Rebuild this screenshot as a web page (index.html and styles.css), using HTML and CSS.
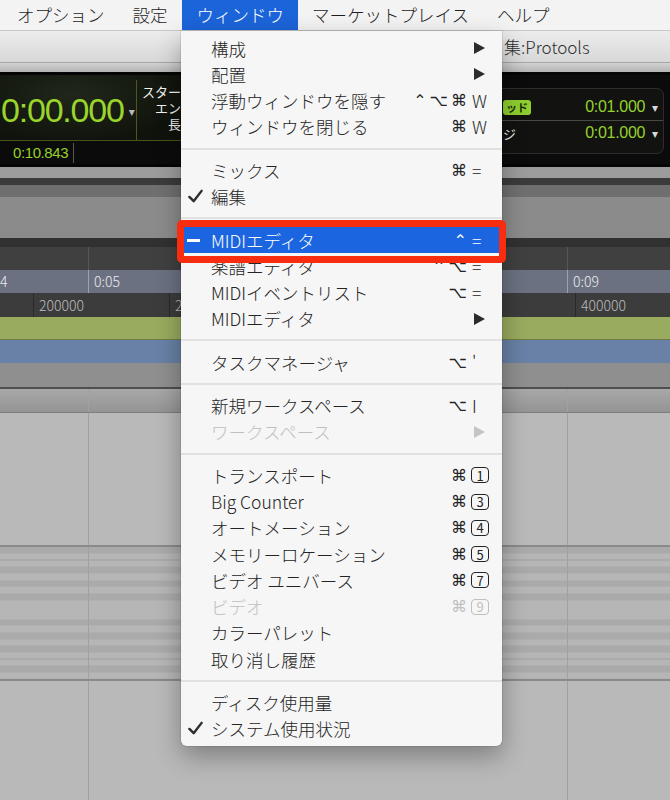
FILE: index.html
```html
<!DOCTYPE html>
<html lang="ja">
<head>
  <meta charset="UTF-8">
  <meta name="viewport" content="width=device-width, initial-scale=1.0">
  <title>ウィンドウ メニュー</title>
  <link rel="stylesheet" href="styles.css">
</head>
<body>
  <div class="screen">
    <nav class="menubar">
      <span>オプション</span>
      <span>設定</span>
      <span class="open">ウィンドウ</span>
      <span>マーケットプレイス</span>
      <span>ヘルプ</span>
    </nav>

    <div class="titlebar"><span class="title">集:Protools</span></div>
    <div class="toolstrip"></div>

    <div class="transport">
      <div class="counter-block">
        <div class="counter-top">
          <div class="counter">
            <span class="big-time">0:00.000</span>
            <span class="caret">&#9662;</span>
          </div>
          <div class="labels">
            <span>スター</span>
            <span>エン</span>
            <span>長</span>
          </div>
        </div>
        <div class="counter-sub">
          <span class="sub-time">0:10.843</span>
        </div>
      </div>
      <div class="selbox">
        <div class="sel-row">
          <span class="badge">ッド</span>
          <span class="sel-value">0:01.000 <span class="caret">&#9662;</span></span>
        </div>
        <div class="sel-row">
          <span class="sel-label">ジ</span>
          <span class="sel-value">0:01.000 <span class="caret">&#9662;</span></span>
        </div>
      </div>
    </div>

    <div class="edit">
      <div class="band band-a"></div>
      <div class="band band-b"></div>
      <div class="band band-c"></div>
      <div class="band band-d"></div>
      <div class="band band-e"></div>
      <div class="ruler ruler-bars cols">
        <div></div><div></div><div></div>
      </div>
      <div class="ruler ruler-time cols">
        <div>4</div><div>0:05</div><div>0:09</div>
      </div>
      <div class="ruler ruler-samples cols-samples">
        <div></div><div>200000</div><div>2</div><div>400000</div>
      </div>
      <div class="band band-green"></div>
      <div class="band band-blue"></div>
      <div class="band band-gray"></div>
      <div class="track-head cols"><div></div><div></div><div></div></div>
      <div class="track cols"><div></div><div></div><div></div></div>
      <div class="track keys cols"><div></div><div></div><div></div></div>
      <div class="track track-end cols"><div></div><div></div><div></div></div>
    </div>

    <div class="menu">
      <div class="item"><span class="mark"></span><span>構成</span><span class="keys-sc"><span class="mods"></span><span class="key"><svg class="arrow" viewBox="0 0 11 12"><polygon points="0,0 11,6 0,12"/></svg></span></span></div>
      <div class="item"><span class="mark"></span><span>配置</span><span class="keys-sc"><span class="mods"></span><span class="key"><svg class="arrow" viewBox="0 0 11 12"><polygon points="0,0 11,6 0,12"/></svg></span></span></div>
      <div class="item"><span class="mark"></span><span>浮動ウィンドウを隠す</span><span class="keys-sc"><span class="mods">⌃⌥⌘</span><span class="key">W</span></span></div>
      <div class="item"><span class="mark"></span><span>ウィンドウを閉じる</span><span class="keys-sc"><span class="mods">⌘</span><span class="key">W</span></span></div>
      <div class="sep"></div>
      <div class="item"><span class="mark"></span><span>ミックス</span><span class="keys-sc"><span class="mods">⌘</span><span class="key">=</span></span></div>
      <div class="item"><span class="mark"><svg class="check" viewBox="0 0 16 16"><path d="M1.5 8.5 L6 13 L14.5 2"/></svg></span><span>編集</span><span class="keys-sc"></span></div>
      <div class="sep"></div>
      <div class="item on"><span class="mark"><span class="dash"></span></span><span>MIDIエディタ</span><span class="keys-sc"><span class="mods">⌃</span><span class="key">=</span></span></div>
      <div class="item"><span class="mark"></span><span>楽譜エディタ</span><span class="keys-sc"><span class="mods">⌃⌥</span><span class="key">=</span></span></div>
      <div class="item"><span class="mark"></span><span>MIDIイベントリスト</span><span class="keys-sc"><span class="mods">⌥</span><span class="key">=</span></span></div>
      <div class="item"><span class="mark"></span><span>MIDIエディタ</span><span class="keys-sc"><span class="mods"></span><span class="key"><svg class="arrow" viewBox="0 0 11 12"><polygon points="0,0 11,6 0,12"/></svg></span></span></div>
      <div class="sep"></div>
      <div class="item"><span class="mark"></span><span>タスクマネージャ</span><span class="keys-sc"><span class="mods">⌥</span><span class="key">'</span></span></div>
      <div class="sep"></div>
      <div class="item"><span class="mark"></span><span>新規ワークスペース</span><span class="keys-sc"><span class="mods">⌥</span><span class="key">I</span></span></div>
      <div class="item off"><span class="mark"></span><span>ワークスペース</span><span class="keys-sc"><span class="mods"></span><span class="key"><svg class="arrow" viewBox="0 0 11 12"><polygon points="0,0 11,6 0,12"/></svg></span></span></div>
      <div class="sep"></div>
      <div class="item"><span class="mark"></span><span>トランスポート</span><span class="keys-sc"><span class="mods">⌘</span><span class="key"><span class="boxkey">1</span></span></span></div>
      <div class="item"><span class="mark"></span><span>Big Counter</span><span class="keys-sc"><span class="mods">⌘</span><span class="key"><span class="boxkey">3</span></span></span></div>
      <div class="item"><span class="mark"></span><span>オートメーション</span><span class="keys-sc"><span class="mods">⌘</span><span class="key"><span class="boxkey">4</span></span></span></div>
      <div class="item"><span class="mark"></span><span>メモリーロケーション</span><span class="keys-sc"><span class="mods">⌘</span><span class="key"><span class="boxkey">5</span></span></span></div>
      <div class="item"><span class="mark"></span><span>ビデオ ユニバース</span><span class="keys-sc"><span class="mods">⌘</span><span class="key"><span class="boxkey">7</span></span></span></div>
      <div class="item off"><span class="mark"></span><span>ビデオ</span><span class="keys-sc"><span class="mods">⌘</span><span class="key"><span class="boxkey">9</span></span></span></div>
      <div class="item"><span class="mark"></span><span>カラーパレット</span><span class="keys-sc"></span></div>
      <div class="item"><span class="mark"></span><span>取り消し履歴</span><span class="keys-sc"></span></div>
      <div class="sep"></div>
      <div class="item"><span class="mark"></span><span>ディスク使用量</span><span class="keys-sc"></span></div>
      <div class="item"><span class="mark"><svg class="check" viewBox="0 0 16 16"><path d="M1.5 8.5 L6 13 L14.5 2"/></svg></span><span>システム使用状況</span><span class="keys-sc"></span></div>
    </div>

    <div class="callout"></div>
  </div>
</body>
</html>
```

FILE: styles.css
```css
body {
  margin: 0;
  padding: 0;
  background: #b8b8b8;
  font-family: "Noto Sans CJK JP", "DejaVu Sans", sans-serif;
}

.screen {
  position: relative;
  width: 670px;
  height: 800px;
  overflow: hidden;
  background: #b8b8b8;
}

/* menu bar */

.menubar {
  display: flex;
  height: 30px;
  background: #f3f3f3;
  border-bottom: 1px solid #c8c8c8;
  font-size: 17.5px;
  font-weight: 300;
  color: #1e1e1e;
}

.menubar span {
  padding: 0 14px;
  line-height: 30px;
  white-space: nowrap;
}

.menubar span:first-child {
  margin-left: 3px;
}

.menubar .open {
  padding-left: 15px;
  background: #1c64da;
  color: #ffffff;
}

/* window title */

.titlebar {
  height: 31px;
  background: linear-gradient(#ececec, #d8d8d8);
  border-bottom: 1px solid #a6a6a6;
}

.title {
  display: block;
  padding-left: 504px;
  line-height: 31px;
  font-size: 17px;
  font-weight: 300;
  color: #2e2e2e;
  white-space: nowrap;
}

.toolstrip {
  height: 9px;
  background: linear-gradient(#d2d2d2, #b4b4b4);
}

/* transport */

.transport {
  display: flex;
  height: 89px;
  border-top: 3px solid #050505;
  border-bottom: 3px solid #050505;
  background: #0b0b0b;
}

.counter-block {
  width: 181px;
  display: flex;
  flex-direction: column;
}

.counter-top {
  display: flex;
  height: 65px;
  border-bottom: 1px solid #45531d;
  background: radial-gradient(ellipse at 40% 30%, #20271a, #10130c 75%);
}

.counter {
  width: 137px;
  display: flex;
  align-items: center;
  padding-left: 1px;
  box-sizing: border-box;
  border-right: 1px solid #4a5822;
  margin: 5px 0 0;
}

.big-time {
  font-family: "Liberation Sans", Arial, sans-serif;
  font-size: 34px;
  letter-spacing: -1.2px;
  color: #9ad52b;
}

.counter .caret {
  margin-left: 5px;
  font-size: 12px;
  color: #b9b9b9;
}

.labels {
  flex: 1;
  display: flex;
  flex-direction: column;
  justify-content: center;
  align-items: flex-end;
  font-size: 13px;
  line-height: 16px;
  color: #f2f2f2;
}

.counter-sub {
  height: 23px;
  display: flex;
  align-items: center;
}

.sub-time {
  padding: 0 5px 0 13px;
  border-right: 1px solid #5a5a4a;
  font-family: "Liberation Sans", Arial, sans-serif;
  font-size: 15px;
  letter-spacing: -0.4px;
  line-height: 20px;
  color: #97d02c;
}

.selbox {
  align-self: flex-start;
  margin: 13px 6px 0 auto;
  width: 164px;
  height: 66px;
  padding-top: 5px;
  box-sizing: border-box;
  background: #121310;
  border: 1px solid #2d2d2d;
  border-radius: 0 7px 7px 0;
}

.sel-row {
  display: flex;
  align-items: center;
  justify-content: space-between;
  height: 26px;
  padding: 0 5px 0 2px;
}

.sel-row + .sel-row {
  height: 24px;
  border-top: 1px solid #4a4a44;
}

.badge {
  padding: 0 3px;
  border-radius: 3px;
  background: #8fd02f;
  color: #1c2a08;
  font-size: 11px;
  font-weight: bold;
  line-height: 15px;
}

.sel-label {
  font-size: 13px;
  color: #f0f0f0;
}

.sel-value {
  font-family: "Liberation Sans", Arial, sans-serif;
  font-size: 16px;
  letter-spacing: -0.3px;
  color: #96d22c;
}

.sel-value .caret {
  margin-left: 3px;
  font-size: 12px;
  color: #d8d8d8;
}

/* edit window */

.band-a { height: 11px; background: #9c9c9c; }
.band-b { height: 7px; background: #3b3b3b; }
.band-c { height: 12px; background: #6f6f6f; }
.band-d { height: 41px; background: #8b8b8b; }
.band-e { height: 9px; background: #313131; }

.cols {
  display: grid;
  grid-template-columns: 88px 479px 1fr;
}

.cols-samples {
  display: grid;
  grid-template-columns: 33px 136px 406px 1fr;
}

.ruler {
  height: 23px;
  font-size: 14px;
  font-weight: 300;
  line-height: 23px;
}

.ruler > div {
  padding-left: 5px;
  white-space: nowrap;
  overflow: hidden;
}

.ruler > div + div {
  border-left: 1px solid #555555;
}

.ruler > div:first-child {
  padding-left: 0;
}

.ruler-bars {
  background: #404040;
}

.ruler-time {
  background: #6b7181;
  color: #ececec;
}

.ruler-time > div + div {
  border-left-color: #4d525d;
}

.ruler-samples {
  height: 24px;
  line-height: 24px;
  background: #3c3c3c;
  color: #bdbdbd;
}

.ruler-samples > div + div {
  border-left-color: #2a2a2a;
}

.band-green {
  height: 23px;
  background: #98ab5e;
  border-bottom: 1px solid #6f7d44;
  box-sizing: border-box;
}

.band-blue {
  height: 23px;
  background: #6981a6;
}

.band-gray {
  height: 24px;
  background: #8f8f8f;
  border-bottom: 2px solid #4e4e4e;
}

.track-head {
  height: 23px;
  background: linear-gradient(#a8a8a8, #949494);
  border-bottom: 1px solid #7e7e7e;
}

.track {
  height: 132px;
  background: #b9b9b9;
  border-bottom: 2px solid #8a8a8a;
}

.cols > div + div {
  border-left: 1px solid #98a3ae;
}

.ruler-bars > div + div {
  border-left-color: #575757;
}

.keys {
  background: repeating-linear-gradient(
    #b6b6b6 0, #b6b6b6 6.65px,
    #aaaaaa 6.65px, #aaaaaa 13.3px,
    #b6b6b6 13.3px, #b6b6b6 19.95px,
    #aaaaaa 19.95px, #aaaaaa 26.6px,
    #b6b6b6 26.6px, #b6b6b6 33.25px,
    #aaaaaa 33.25px, #aaaaaa 39.9px,
    #b6b6b6 39.9px, #b6b6b6 45.8px,
    #9f9f9f 45.8px, #9f9f9f 46.55px,
    #b6b6b6 46.55px, #b6b6b6 53.2px,
    #aaaaaa 53.2px, #aaaaaa 59.85px,
    #b6b6b6 59.85px, #b6b6b6 66.5px,
    #aaaaaa 66.5px, #aaaaaa 73.15px,
    #b6b6b6 73.15px, #b6b6b6 79px,
    #9f9f9f 79px, #9f9f9f 79.8px
  );
  background-position: 0 -66.5px;
}

.track-end {
  height: 140px;
  border-bottom: none;
}

/* dropdown menu */

.menu {
  position: absolute;
  top: 31px;
  left: 181px;
  width: 321px;
  padding: 4px 0 4px;
  background: #f6f6f6;
  border-radius: 0 0 6px 6px;
  box-shadow: 0 10px 26px rgba(0, 0, 0, 0.32), 0 0 0 1px rgba(0, 0, 0, 0.08);
  font-size: 17.5px;
  font-weight: 300;
  color: #242424;
}

.item {
  display: grid;
  grid-template-columns: 30px 1fr auto;
  align-items: center;
  height: 26.25px;
  padding-right: 12px;
  white-space: nowrap;
}

.item.on {
  background: #1b66e0;
  color: #ffffff;
}

.item.off {
  color: #bfbfbf;
}

.mark {
  display: flex;
  align-items: center;
  padding-left: 7px;
}

.check {
  width: 15px;
  height: 15px;
  fill: none;
  stroke: #2e2e2e;
  stroke-width: 2.6;
  stroke-linecap: round;
  stroke-linejoin: round;
}

.dash {
  display: block;
  width: 13px;
  height: 3px;
  margin-left: -1px;
  background: #ffffff;
}

.keys-sc {
  display: flex;
  align-items: center;
}

.mods {
  text-align: right;
  font-family: "DejaVu Sans", "Noto Sans CJK JP", sans-serif;
  font-size: 16px;
  font-weight: 400;
  letter-spacing: 3px;
}

.key {
  width: 20px;
  padding-left: 2px;
  box-sizing: border-box;
}

.arrow {
  display: block;
  width: 11px;
  height: 12px;
  margin-left: 2px;
  fill: #2c2c2c;
}

.item.off .arrow {
  fill: #c4c4c4;
}

.boxkey {
  display: flex;
  align-items: center;
  justify-content: center;
  width: 18px;
  height: 16px;
  margin-left: -1px;
  border: 1.5px solid currentColor;
  border-radius: 4px;
  box-sizing: border-box;
  font-size: 13px;
  font-weight: 400;
  line-height: 1;
}

.sep {
  height: 2px;
  margin: 7.6px 0;
  background: #e1e1e1;
}

/* annotation frame */

.callout {
  position: absolute;
  left: 177px;
  top: 220px;
  width: 329px;
  height: 43px;
  border: 7px solid #f82c0e;
  border-radius: 5px;
  box-sizing: border-box;
}
```
